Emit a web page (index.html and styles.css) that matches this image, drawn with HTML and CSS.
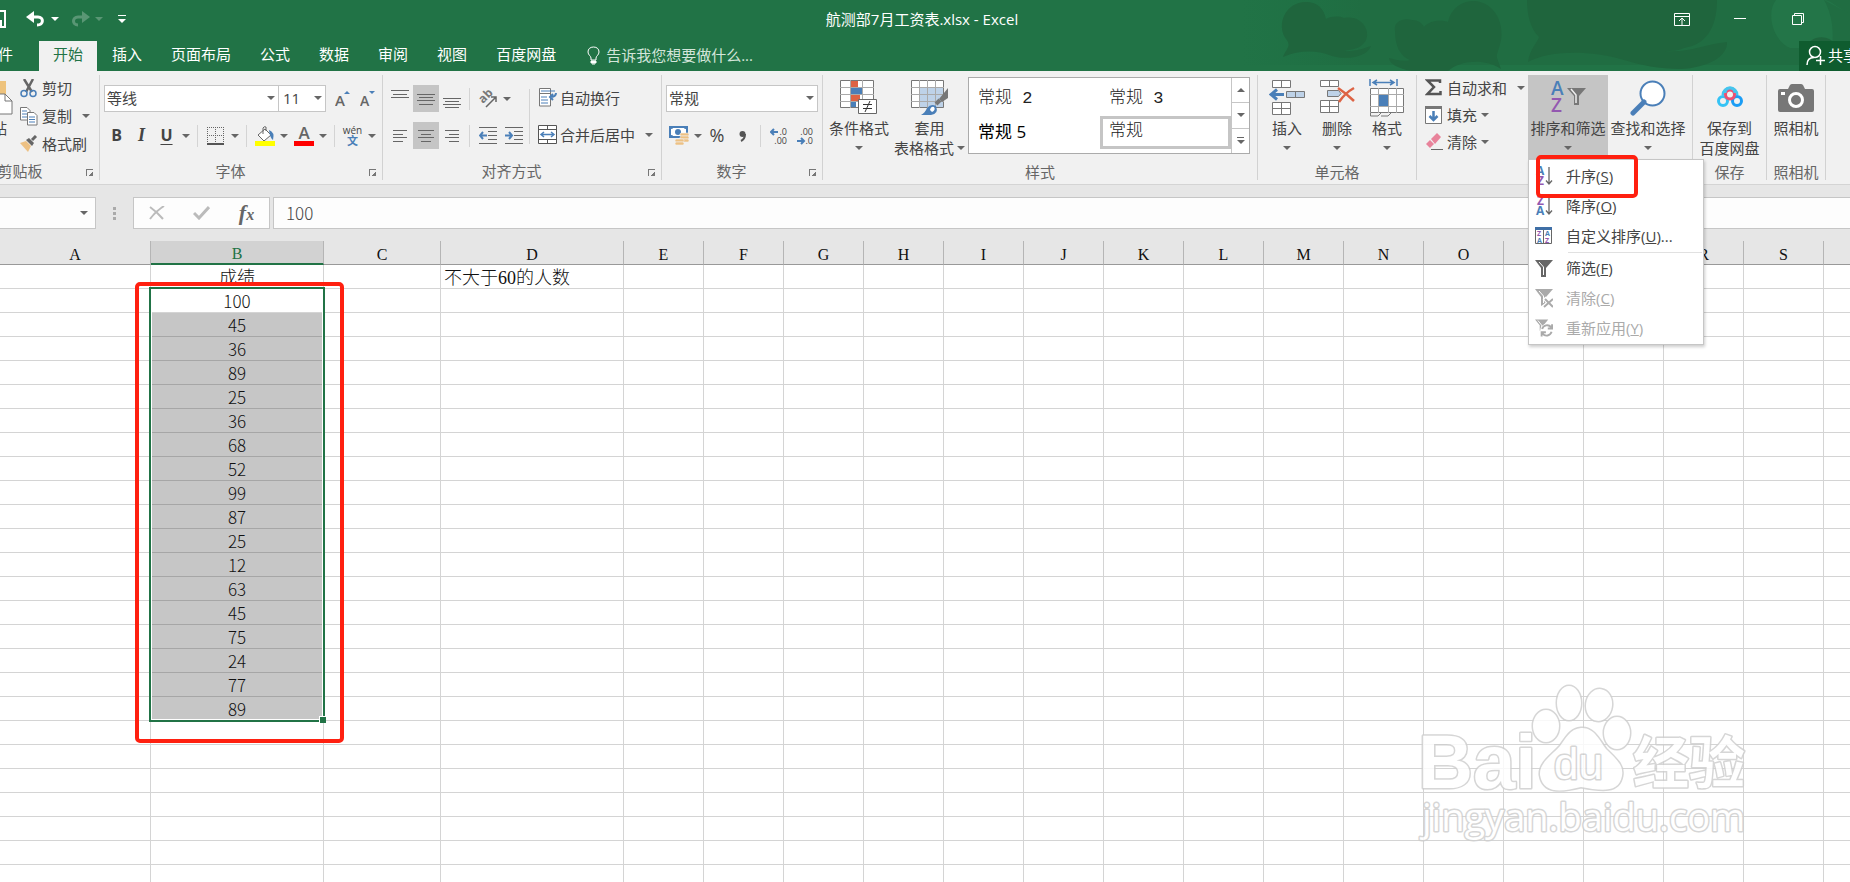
FILE: index.html
```html
<!DOCTYPE html>
<html lang="zh-CN">
<head>
    <meta charset="UTF-8">
    <meta name="viewport" content="width=device-width, initial-scale=1.0">
    <title>航测部7月工资表.xlsx - Excel</title>
    <link rel="stylesheet" href="styles.css">
</head>
<body>

    <header class="app-header">
        <!-- Nubes decorativas -->
        <svg class="clouds" width="610" height="71" viewBox="0 0 610 71" aria-hidden="true">
            <defs>
                <linearGradient id="tint" x1="0" x2="1" y1="0" y2="0">
                    <stop offset="0" stop-color="#1d7044" stop-opacity="0"/>
                    <stop offset="0.2" stop-color="#206d42" stop-opacity="1"/>
                </linearGradient>
            </defs>
            <rect width="610" height="65" fill="url(#tint)"/>
            <g fill="#1f653d">
                <path d="M43 57C46 49 52 46 46 39C36 25 45 2 66 2C78 2 84 9 86 19C92 16 99 16 104 18C124 14 134 36 122 45C116 50 108 50 103 51C116 52 124 48 131 46C126 58 106 60 92 56C76 50 60 50 43 57Z"/>
                <path d="M155 31C153 22 163 17 172 20C178 20 182 23 184 27C190 20 202 20 208 22C211 8 222 1 234 1C254 2 264 22 261 40C259 50 256 54 257 58L261 69C245 58 220 60 208 71C170 76 149 66 149 58C156 60 164 62 170 60C160 56 155 46 155 31Z"/>
                <path d="M287 0H477C477 22 470 44 444 48C438 51 430 51 424 51C452 53 464 44 487 42C488 56 468 68 440 69C420 69 400 65 384 60C350 50 310 50 288 62C290 48 298 42 299 37C290 28 287 14 287 0Z"/>
            </g>
            <path d="M610 14C598 8 590 0 584 0H536C526 12 532 40 550 48H592C594 30 592 14 584 0" fill="#237548"/>
            <path d="M566 50C568 33 594 33 598 50Z" fill="#1f653d"/>
        </svg>

        <div class="title-bar">
            <div class="quick-access">
                <button class="qat save" aria-label="保存">
                    <svg width="18" height="18" viewBox="0 0 18 18"><path d="M1 1H17V17H4L1 14Z" fill="none" stroke="#fff" stroke-width="2"/><path d="M5 10H14V16H12V13H9V16H5Z" fill="#fff"/></svg>
                </button>
                <button class="qat" aria-label="撤消">
                    <svg width="20" height="18" viewBox="0 0 20 18"><path d="M3 7H12C18 7 18 15 11 15" fill="none" stroke="#fff" stroke-width="3"/><path d="M0 7L8 1V13Z" fill="#fff"/></svg>
                    <span class="caret"></span>
                </button>
                <button class="qat dim" aria-label="恢复">
                    <svg width="20" height="18" viewBox="0 0 20 18"><path d="M17 7H8C2 7 2 15 8 15" fill="none" stroke="#fff" stroke-width="3"/><path d="M20 7L12 1V13Z" fill="#fff"/></svg>
                    <span class="caret"></span>
                </button>
                <button class="qat more" aria-label="自定义快速访问工具栏"><span class="caret"></span></button>
            </div>
            <h1>航测部7月工资表.xlsx - Excel</h1>
            <div class="window-buttons">
                <button aria-label="功能区显示选项"><svg width="16" height="13" viewBox="0 0 16 13"><path d="M.5 .5H15.500V12.500H.5ZM.5 3.500H15.500M8 12V5M5 8L8 5L11 8" fill="none" stroke="#fff"/></svg></button>
                <button aria-label="最小化"><svg width="12" height="12" viewBox="0 0 12 12"><path d="M0 5.500H12" stroke="#fff"/></svg></button>
                <button aria-label="还原"><svg width="12" height="12" viewBox="0 0 12 12"><path d="M.5 2.500H9.500V11.500H.5ZM2.500 2.500V.5H11.500V9.500H9.500" fill="none" stroke="#fff"/></svg></button>
                <button aria-label="关闭"><svg width="12" height="12" viewBox="0 0 12 12"><path d="M0 0L12 12M12 0L0 12" stroke="#fff"/></svg></button>
            </div>
        </div>

        <nav class="tabs">
            <button class="tab file">文件</button>
            <button class="tab active">开始</button>
            <button class="tab">插入</button>
            <button class="tab">页面布局</button>
            <button class="tab">公式</button>
            <button class="tab">数据</button>
            <button class="tab">审阅</button>
            <button class="tab">视图</button>
            <button class="tab">百度网盘</button>
            <label class="tell-me">
                <svg width="13" height="19" viewBox="0 0 13 19"><path d="M4 14V12C4 10 1 9 1 6C1 3 3 1 6.500 1C10 1 12 3 12 6C12 9 9 10 9 12V14Z" fill="none" stroke="#fff"/><path d="M4 15H9V17H4ZM5 18H8" stroke="#fff" fill="#fff"/></svg>
                <input type="text" placeholder="告诉我您想要做什么..." aria-label="告诉我您想要做什么">
            </label>
            <button class="share">
                <svg width="19" height="20" viewBox="0 0 19 20"><g fill="none" stroke="#fff" stroke-width="1.500"><circle cx="9" cy="7" r="5.500"/><path d="M1 20C1 15 4 12.500 8 12.500M10 15.500H19M14.500 11V20"/></g></svg>
                <span>共享</span>
            </button>
        </nav>
    </header>

    <main>
        <section class="ribbon">

            <!-- 剪贴板 -->
            <div class="group clipboard">
                <div class="group-body">
                    <button class="big paste">
                        <span class="big-icon"><svg width="42" height="36" viewBox="0 0 42 36"><path d="M6 1H35V30H6Z" fill="#eec37d"/><path d="M16 14H34L41 21V34H16Z" fill="#fff" stroke="#777"/><path d="M34 14V21H41" fill="none" stroke="#777"/></svg></span>
                        <span>粘贴</span>
                    </button>
                    <div class="stack">
                        <button class="item">
                            <svg width="18" height="19" viewBox="0 0 18 19"><path d="M4 0L12 13M13 0L6 13" stroke="#666" stroke-width="2.500"/><g fill="none" stroke="#4a7fb8" stroke-width="1.500"><circle cx="4" cy="14.500" r="3"/><circle cx="13" cy="14.500" r="3"/></g></svg>
                            <span>剪切</span>
                        </button>
                        <button class="item">
                            <svg width="18" height="19" viewBox="0 0 18 19"><path d="M.5 .5H7L10 3.500V13H.5Z" fill="#fff" stroke="#777"/><path d="M2 4H7M2 7H7M2 10H7" stroke="#4a7fb8"/><path d="M7.500 5.500H14L17 8.500V18H7.500Z" fill="#fff" stroke="#777"/><path d="M9 10H15M9 12.500H15M9 15H15" stroke="#4a7fb8"/></svg>
                            <span>复制</span>
                            <span class="caret far"></span>
                        </button>
                        <button class="item">
                            <svg width="18" height="18" viewBox="0 0 18 18"><path d="M0 8L6 6L11 11L8 17Z" fill="#edc184"/><path d="M6 5L9 3L14 8L12 11Z" fill="#666"/><path d="M12 5L16 1" stroke="#666" stroke-width="3"/></svg>
                            <span>格式刷</span>
                        </button>
                    </div>
                </div>
                <div class="group-label"><span>剪贴板</span><button class="launcher" aria-label="剪贴板设置"></button></div>
            </div>

            <!-- 字体 -->
            <div class="group font">
                <div class="group-body rows">
                    <div class="row">
                        <span class="select"><select aria-label="字体" class="font-name"><option>等线</option></select></span>
                        <span class="select"><select aria-label="字号" class="font-size"><option>11</option></select></span>
                        <button class="tool grow" aria-label="增大字号"><svg width="15" height="18" viewBox="0 0 15 18"><text x="0" y="16" class="glyph-a">A</text><path d="M9 4L12 1L15 4Z" fill="#4a7fb8"/></svg></button>
                        <button class="tool" aria-label="减小字号"><svg width="15" height="18" viewBox="0 0 15 18"><text x="0" y="16" class="glyph-a small">A</text><path d="M9 1L12 4L15 1Z" fill="#4a7fb8"/></svg></button>
                    </div>
                    <div class="row">
                        <button class="tool bold">B</button>
                        <button class="tool italic">I</button>
                        <button class="tool underline">U</button>
                        <button class="drop" aria-label="下划线"><span class="caret"></span></button>
                        <i class="sep"></i>
                        <button class="tool" aria-label="边框"><svg width="17" height="18" viewBox="0 0 17 18"><path d="M0 .5H17M0 8.500H17M.5 0V17M8.500 0V17M16.500 0V17" stroke="#666" stroke-dasharray="1 1"/><path d="M0 17H17" stroke="#555" stroke-width="2"/></svg></button>
                        <button class="drop" aria-label="边框选项"><span class="caret"></span></button>
                        <i class="sep"></i>
                        <button class="tool" aria-label="填充颜色"><svg width="20" height="20" viewBox="0 0 20 20"><path d="M3 9L10 3L16 9L9 15Z" fill="#fff" stroke="#666"/><path d="M8 8V2Q9 0 11 1V5" fill="none" stroke="#666"/><path d="M14 4Q20 6 18 14Q15 12 14 4Z" fill="#4a7fb8"/><path d="M0 15H20V20H0Z" fill="#ff0"/></svg></button>
                        <button class="drop" aria-label="填充颜色选项"><span class="caret"></span></button>
                        <button class="tool" aria-label="字体颜色"><svg width="20" height="20" viewBox="0 0 20 20"><text x="10" y="13" class="glyph-a large" text-anchor="middle">A</text><path d="M0 15H20V20H0Z" fill="#f00"/></svg></button>
                        <button class="drop" aria-label="字体颜色选项"><span class="caret"></span></button>
                        <i class="sep"></i>
                        <button class="tool pinyin"><span>wén</span><b>文</b></button>
                        <button class="drop" aria-label="拼音选项"><span class="caret"></span></button>
                    </div>
                </div>
                <div class="group-label"><span>字体</span><button class="launcher" aria-label="字体设置"></button></div>
            </div>

            <!-- 对齐方式 -->
            <div class="group align">
                <div class="group-body">
                    <div class="rows">
                        <div class="row">
                            <button class="tool" aria-label="顶端对齐"><svg width="18" height="18" viewBox="0 0 18 18"><path d="M0 .5H18M2 4.500H16M0 7.500H18" stroke="#666"/></svg></button>
                            <button class="tool on" aria-label="垂直居中"><svg width="18" height="18" viewBox="0 0 18 18"><path d="M0 4.500H18M2 7.500H16M0 10.500H18M2 14.500H16" stroke="#666"/></svg></button>
                            <button class="tool" aria-label="底端对齐"><svg width="18" height="18" viewBox="0 0 18 18"><path d="M0 8.500H18M2 11.500H16M0 14.500H18M2 17.500H16" stroke="#666"/></svg></button>
                            <i class="sep"></i>
                            <button class="tool" aria-label="方向"><svg width="20" height="18" viewBox="0 0 20 18" overflow="visible"><text class="ab" transform="translate(5 14) rotate(-45)">ab</text><path d="M8 17L18 7M13 7H18V12" fill="none" stroke="#666" stroke-width="1.500"/></svg></button>
                            <button class="drop" aria-label="方向选项"><span class="caret"></span></button>
                        </div>
                        <div class="row">
                            <button class="tool" aria-label="左对齐"><svg width="14" height="12" viewBox="0 0 14 12"><path d="M0 .5H14M0 4.500H10M0 7.500H14M0 11.500H10" stroke="#666"/></svg></button>
                            <button class="tool on" aria-label="居中"><svg width="16" height="12" viewBox="0 0 16 12"><path d="M0 .5H16M3 4.500H13M0 7.500H16M3 11.500H13" stroke="#666"/></svg></button>
                            <button class="tool" aria-label="右对齐"><svg width="14" height="12" viewBox="0 0 14 12"><path d="M0 .5H14M4 4.500H14M0 7.500H14M4 11.500H14" stroke="#666"/></svg></button>
                            <i class="sep"></i>
                            <button class="tool" aria-label="减少缩进量"><svg width="18" height="17" viewBox="0 0 18 17"><path d="M0 .5H18M9 4.500H18M9 8.500H18M9 12.500H18M0 16.500H18" stroke="#666"/><path d="M1 8.500H8M4 5L1 8.500L4 12" fill="none" stroke="#4a7fb8" stroke-width="2"/></svg></button>
                            <button class="tool" aria-label="增加缩进量"><svg width="18" height="17" viewBox="0 0 18 17"><path d="M0 .5H18M9 4.500H18M9 8.500H18M9 12.500H18M0 16.500H18" stroke="#666"/><path d="M0 8.500H7M4 5L7 8.500L4 12" fill="none" stroke="#4a7fb8" stroke-width="2"/></svg></button>
                        </div>
                    </div>
                    <i class="sep tall"></i>
                    <div class="rows">
                        <button class="item wide">
                            <svg width="19" height="19" viewBox="0 0 19 19"><path d="M1.500 .5H12.500V18H1.500Z" fill="#fff" stroke="#777"/><path d="M1 5.500H13" stroke="#777"/><path d="M3 3H17M3 9H9M3 12H10M3 15H10" stroke="#4a7fb8"/><path d="M18 5Q18 9 12 9M15 6L12 9L15 12" fill="none" stroke="#4a7fb8" stroke-width="2"/></svg>
                            <span>自动换行</span>
                        </button>
                        <button class="item wide">
                            <svg width="19" height="19" viewBox="0 0 19 19"><path d="M.5 .5H18.500V18.500H.5ZM.5 4.500H18.500M.5 14.500H18.500M9.500 0V4M9.500 15V19" fill="#fff" stroke="#555"/><path d="M3 9.500H16M6 7L3 9.500L6 12M13 7L16 9.500L13 12" fill="none" stroke="#4a7fb8" stroke-width="1.500"/></svg>
                            <span>合并后居中</span>
                            <span class="caret"></span>
                        </button>
                    </div>
                </div>
                <div class="group-label"><span>对齐方式</span><button class="launcher" aria-label="对齐设置"></button></div>
            </div>

            <!-- 数字 -->
            <div class="group number">
                <div class="group-body rows">
                    <div class="row">
                        <span class="select"><select aria-label="数字格式" class="number-format"><option>常规</option></select></span>
                    </div>
                    <div class="row">
                        <button class="tool" aria-label="会计数字格式"><svg width="20" height="20" viewBox="0 0 20 20"><path d="M0 0H19V12H0Z" fill="#4a7fb8"/><path d="M2 3Q4 3 4 2H15Q15 3 17 3V9Q15 9 15 10H4Q4 9 2 9Z" fill="#fff"/><circle cx="9" cy="6" r="3" fill="#4a7fb8"/><g fill="#edc184" stroke="#f1f1f1" stroke-width=".6"><rect x="11" y="7" width="9" height="3" rx="1.500"/><rect x="11" y="10" width="9" height="3" rx="1.500"/><rect x="11" y="13" width="9" height="3" rx="1.500"/><rect x="6" y="13" width="9" height="3" rx="1.500"/><rect x="6" y="16" width="9" height="3" rx="1.500"/></g></svg></button>
                        <button class="drop" aria-label="会计格式选项"><span class="caret"></span></button>
                        <button class="tool percent">%</button>
                        <button class="tool" aria-label="千位分隔样式"><svg width="8" height="12" viewBox="0 0 8 12"><circle cx="3.500" cy="4" r="3" fill="#555"/><path d="M6 4Q6 9 2 11" fill="none" stroke="#555" stroke-width="2"/></svg></button>
                        <i class="sep"></i>
                        <button class="tool decimal" aria-label="增加小数位数"><svg width="18" height="18" viewBox="0 0 18 18"><path d="M1 5H8M4 2L1 5L4 8" fill="none" stroke="#4a7fb8" stroke-width="2"/><text x="17" y="8" text-anchor="end">.0</text><text x="17" y="17" text-anchor="end">.00</text></svg></button>
                        <button class="tool decimal" aria-label="减少小数位数"><svg width="18" height="18" viewBox="0 0 18 18"><path d="M1 14H8M5 11L8 14L5 17" fill="none" stroke="#4a7fb8" stroke-width="2"/><text x="17" y="8" text-anchor="end">.00</text><text x="17" y="17" text-anchor="end">.0</text></svg></button>
                    </div>
                </div>
                <div class="group-label"><span>数字</span><button class="launcher" aria-label="数字设置"></button></div>
            </div>

            <!-- 样式 -->
            <div class="group styles">
                <div class="group-body">
                    <button class="big cond">
                        <span class="big-icon"><svg width="38" height="35" viewBox="0 0 38 35"><path d="M.5 .5H33.500V27.500H.5Z" fill="#fff" stroke="#777"/><path d="M0 7.500H34M0 14.500H34M0 21.500H34M10.500 0V28M22.500 0V28" stroke="#aaa"/><path d="M11 1H18V7H11ZM11 15H20V21H11Z" fill="#dd6344"/><path d="M11 8H22V14H11ZM11 22H16V27H11Z" fill="#4a7fb8"/><path d="M18.500 19.500H36.500V33.500H18.500Z" fill="#fff" stroke="#666"/><path d="M23 24.500H32M23 28.500H32M30 21L25 32" stroke="#333"/></svg></span>
                        <span>条件格式</span>
                        <span class="caret"></span>
                    </button>
                    <button class="big table-format">
                        <span class="big-icon"><svg width="38" height="35" viewBox="0 0 38 35"><path d="M.5 .5H32.500V27.500H.5Z" fill="#fff" stroke="#777"/><path d="M9 8H32V27H9Z" fill="#bed2e8"/><path d="M0 7.500H33M0 14.500H33M0 21.500H33M8.500 0V28M16.500 0V28M24.500 0V28" stroke="#aaa"/><path d="M37 8V18L31 22L28 19Z" fill="#777"/><path d="M29 20L25 24" stroke="#777" stroke-width="4"/><path d="M10 35Q14 33 16 28Q20 23 25 26Q28 34 20 35Z" fill="#4a7fb8"/><path d="M19 30Q20 26 23 27Q25 30 21 32Z" fill="#fff"/></svg></span>
                        <span>套用</span>
                        <span class="with-caret">表格格式<span class="caret"></span></span>
                    </button>
                    <div class="gallery">
                        <div class="gallery-items">
                            <button>常规 2</button>
                            <button>常规 3</button>
                            <button class="sans">常规 5</button>
                            <button class="chosen">常规</button>
                        </div>
                        <div class="gallery-scroll">
                            <button aria-label="向上"><span class="caret up"></span></button>
                            <button aria-label="向下"><span class="caret"></span></button>
                            <button aria-label="其他" class="more"><span class="caret"></span></button>
                        </div>
                    </div>
                </div>
                <div class="group-label"><span>样式</span></div>
            </div>

            <!-- 单元格 -->
            <div class="group cells">
                <div class="group-body">
                    <button class="big">
                        <span class="big-icon"><svg width="36" height="36" viewBox="0 0 36 36"><g fill="#fff" stroke="#777"><path d="M3.500 .5H21.500V7.500H3.500ZM12.500 0V8"/><path d="M3.500 22.500H21.500V34.500H3.500ZM3 28.500H22M12.500 22V35"/></g><path d="M17.500 11.500H35.500V17.500H17.500ZM26.500 11V18" fill="#bed2e8" stroke="#777"/><path d="M2 14.500H15M8 9.500L2 14.500L8 19.500" fill="none" stroke="#4a7fb8" stroke-width="3"/></svg></span>
                        <span>插入</span>
                        <span class="caret"></span>
                    </button>
                    <button class="big">
                        <span class="big-icon"><svg width="36" height="36" viewBox="0 0 36 36"><g fill="#fff" stroke="#777"><path d="M1.500 .5H19.500V6.500H1.500ZM10.500 0V7"/><path d="M1.500 20.500H19.500V32.500H1.500ZM1 26.500H20M10.500 20V33"/></g><path d="M8.500 10.500H19.500L22 13.500L19.500 16.500H8.500Z" fill="#bed2e8" stroke="#777"/><path d="M19 8Q28 14 35 21M35 8Q26 13 20 22" fill="none" stroke="#dd6344" stroke-width="2.500"/></svg></span>
                        <span>删除</span>
                        <span class="caret"></span>
                    </button>
                    <button class="big">
                        <span class="big-icon"><svg width="36" height="38" viewBox="0 0 36 38"><path d="M1 0V7M28 0V7M4 3.500H25M8 1L4 3.500L8 6M21 1L25 3.500L21 6" fill="none" stroke="#4a7fb8" stroke-width="1.500"/><path d="M1.500 9.500H34.500V33.500H1.500Z" fill="#fff" stroke="#777"/><path d="M1 15.500H35M1 27.500H35M9.500 9V34M19.500 9V34M27.500 9V34" stroke="#aaa"/><path d="M10 16H19V27H10Z" fill="#4a7fb8"/><path d="M1.500 34V37H9L12 34M12 37H19L22 34" fill="none" stroke="#777"/></svg></span>
                        <span>格式</span>
                        <span class="caret"></span>
                    </button>
                </div>
                <div class="group-label"><span>单元格</span></div>
            </div>

            <!-- 编辑 -->
            <div class="group editing">
                <div class="group-body">
                    <div class="stack">
                        <button class="item">
                            <svg width="18" height="17" viewBox="0 0 18 17"><path d="M15 4V1.500H2.500L9 8L2.500 15H15.500V12" fill="none" stroke="#555" stroke-width="2.500"/></svg>
                            <span>自动求和</span>
                            <span class="caret far"></span>
                        </button>
                        <button class="item">
                            <svg width="18" height="18" viewBox="0 0 18 18"><path d="M.5 .5H16.500V17.500H.5Z" fill="#fff" stroke="#777"/><path d="M0 0H17V3H0Z" fill="#777"/><path d="M8.500 5V14M4.500 10L8.500 14L12.500 10" fill="none" stroke="#4a7fb8" stroke-width="2.500"/></svg>
                            <span>填充</span>
                            <span class="caret"></span>
                        </button>
                        <button class="item">
                            <svg width="18" height="17" viewBox="0 0 18 17"><path d="M6 6L12 0L16 4L10 11Z" fill="#e8839b"/><path d="M1 11L5 7L9 11L5 15Z" fill="#e8839b"/><path d="M6 16.500H18" stroke="#666"/></svg>
                            <span>清除</span>
                            <span class="caret"></span>
                        </button>
                    </div>
                    <div class="sort">
                        <button class="big pressed" aria-expanded="true">
                            <span class="big-icon"><svg width="36" height="36" viewBox="0 0 36 36"><text x="1" y="15" class="az blue">A</text><text x="1" y="32" class="az violet">Z</text><path d="M17 8H36L29 16V25L24 25V16Z" fill="#777"/><path d="M21 9L26 15V23" fill="none" stroke="#eee" stroke-width="1.500"/></svg></span>
                            <span>排序和筛选</span>
                            <span class="caret"></span>
                        </button>
                        <div class="menu" role="menu">
                            <button role="menuitem">
                                <svg width="18" height="20" viewBox="0 0 18 20"><text x="1" y="9" class="mini blue">A</text><text x="2" y="19" class="mini violet">Z</text><path d="M14 1V18M11 14.500L14 18L17 14.500" fill="none" stroke="#666" stroke-width="1.300"/></svg>
                                <span>升序(<u>S</u>)</span>
                            </button>
                            <button role="menuitem">
                                <svg width="18" height="20" viewBox="0 0 18 20"><text x="2" y="9" class="mini violet">Z</text><text x="1" y="19" class="mini blue">A</text><path d="M14 1V18M11 14.500L14 18L17 14.500" fill="none" stroke="#666" stroke-width="1.300"/></svg>
                                <span>降序(<u>O</u>)</span>
                            </button>
                            <button role="menuitem">
                                <svg width="18" height="18" viewBox="0 0 18 18"><path d="M.5 .5H16.500V16.500H.5ZM8.500 0V17" fill="#fff" stroke="#666"/><path d="M0 0H17V3H0Z" fill="#3f6fa6"/><g class="tiny"><text x="2" y="9" class="violet">Z</text><text x="2" y="16" class="blue">A</text><text x="10" y="9" class="blue">A</text><text x="10" y="16" class="violet">Z</text></g></svg>
                                <span>自定义排序(<u>U</u>)...</span>
                            </button>
                            <hr>
                            <button role="menuitem">
                                <svg width="18" height="18" viewBox="0 0 18 18"><path d="M0 1H18L11 9V18H6V9Z" fill="#666"/><path d="M4 3L8.500 8V16" fill="none" stroke="#fff"/></svg>
                                <span>筛选(<u>F</u>)</span>
                            </button>
                            <button role="menuitem" disabled>
                                <svg width="18" height="19" viewBox="0 0 18 19"><path d="M0 0H18L11 8V14L6 17V8Z" fill="#aaa"/><path d="M4 2L8.500 7V14" fill="none" stroke="#fff"/><path d="M9 9L18 18M18 9L9 18" stroke="#fff" stroke-width="4"/><path d="M10 10L18 18M18 10L9 18" stroke="#aaa" stroke-width="2"/></svg>
                                <span>清除(<u>C</u>)</span>
                            </button>
                            <button role="menuitem" disabled>
                                <svg width="18" height="19" viewBox="0 0 19 19"><path d="M0 0H14L9 6V12L5 12V6Z" fill="#aaa"/><path d="M3 1L7 6V12" fill="none" stroke="#fff"/><circle cx="12.500" cy="11.500" r="7" fill="#fff"/><path d="M7.500 10A5.500 5.500 0 0 1 17 8M18 5V9.500H13.500M17.500 13A5.500 5.500 0 0 1 8 15M7 18V13.500H11.500" fill="none" stroke="#aaa" stroke-width="2"/></svg>
                                <span>重新应用(<u>Y</u>)</span>
                            </button>
                        </div>
                        <div class="mark mark-menu"></div>
                    </div>
                    <button class="big find">
                        <span class="big-icon"><svg width="36" height="36" viewBox="0 0 36 36"><circle cx="22.500" cy="13.500" r="12" fill="#fff" stroke="#4a7fb8" stroke-width="2"/><path d="M14 22L3 33" stroke="#4a7fb8" stroke-width="5" stroke-linecap="round"/></svg></span>
                        <span>查找和选择</span>
                        <span class="caret"></span>
                    </button>
                </div>
                <div class="group-label"><span>编辑</span></div>
            </div>

            <!-- 百度网盘 -->
            <div class="group netdisk">
                <div class="group-body">
                    <button class="big">
                        <span class="big-icon"><svg width="26" height="24" viewBox="0 0 26 24"><g fill="none" stroke-width="3"><circle cx="6" cy="15" r="4.500" stroke="#35c3f5"/><circle cx="20" cy="15" r="4.500" stroke="#1b9df5"/><path d="M6 9A7 7 0 0 1 20 9" stroke="#45c5ee"/><circle cx="13" cy="8.500" r="4.500" stroke="#ee5070"/><path d="M8 7A5 5 0 0 1 18 7" stroke="#45c5ee"/></g></svg></span>
                        <span>保存到</span>
                        <span>百度网盘</span>
                    </button>
                </div>
                <div class="group-label"><span>保存</span></div>
            </div>

            <!-- 照相机 -->
            <div class="group camera">
                <div class="group-body">
                    <button class="big">
                        <span class="big-icon"><svg width="36" height="28" viewBox="0 0 36 28"><path d="M2 5H10L12 1Q13 0 14 0H23Q24 0 25 1L27 5H34Q36 5 36 7V26Q36 28 34 28H2Q0 28 0 26V7Q0 5 2 5Z" fill="#777"/><circle cx="18" cy="16" r="6.500" fill="#777" stroke="#fff" stroke-width="3"/><path d="M3 8H7V11H3Z" fill="#fff"/></svg></span>
                        <span>照相机</span>
                    </button>
                </div>
                <div class="group-label"><span>照相机</span></div>
            </div>
        </section>

        <section class="formula-bar">
            <div class="name-box"><input type="text" aria-label="名称框"><span class="caret"></span></div>
            <div class="dots"><i></i><i></i><i></i></div>
            <div class="formula-buttons">
                <button aria-label="取消"><svg width="16" height="14" viewBox="0 0 16 14"><path d="M1 1Q8 6 14 13M15 0Q7 5 1 13" fill="none" stroke="#bbb" stroke-width="2"/></svg></button>
                <button aria-label="输入"><svg width="17" height="14" viewBox="0 0 17 14"><path d="M1 7L6 12L16 1" fill="none" stroke="#bbb" stroke-width="3"/></svg></button>
                <button class="fx" aria-label="插入函数"><i>f</i><i class="x">x</i></button>
            </div>
            <input class="formula" type="text" value="100" aria-label="编辑栏">
        </section>

        <section class="sheet">
            <table>
                <colgroup>
                    <col class="col-a"><col class="col-b"><col class="col-c"><col class="col-d">
                    <col class="col" span="22">
                </colgroup>
                <thead><tr id="letters"></tr></thead>
                <tbody id="rows"></tbody>
            </table>
            <div class="selection"></div>
            <div class="mark mark-range"></div>

            <svg class="watermark" width="340" height="170" viewBox="0 0 340 170">
                <g class="outline">
                    <ellipse cx="130" cy="45" rx="13" ry="16"/>
                    <ellipse cx="153" cy="22" rx="12" ry="17"/>
                    <ellipse cx="183" cy="24" rx="13" ry="16" transform="rotate(8 183 24)"/>
                    <ellipse cx="201" cy="52" rx="13" ry="16"/>
                    <path d="M165 47C178 46 184 60 190 68C200 78 208 84 206 95C203 112 186 110 165 106C145 111 127 113 124 94C123 82 136 74 144 65C150 57 154 48 165 47Z"/>
                    <text x="2" y="107" class="wm-name">Bai</text>
                    <text x="138" y="98" class="wm-du">du</text>
                    <text x="217" y="102" class="wm-cjk">经验</text>
                    <text x="6" y="150" class="wm-url">jingyan.baidu.com</text>
                </g>
            </svg>
        </section>
    </main>

    <script>
        const letters = 'ABCDEFGHIJKLMNOPQRSTUVWXYZ'.split('');
        const scores = [100, 45, 36, 89, 25, 36, 68, 52, 99, 87, 25, 12, 63, 45, 75, 24, 77, 89];
        const rowCount = 40;

        document.getElementById('letters').innerHTML = letters
            .map(l => `<th class="${l === 'B' ? 'current' : ''}">${l}</th>`)
            .join('');

        const body = document.getElementById('rows');
        for (let r = 0; r < rowCount; r++) {
            const row = body.insertRow();
            letters.forEach(() => row.insertCell());

            if (r === 0) {
                row.cells[1].textContent = '成绩';
                row.cells[1].className = 'head';
                row.cells[3].textContent = '不大于60的人数';
                row.cells[3].className = 'note';
            } else if (r <= scores.length) {
                row.cells[1].textContent = scores[r - 1];
                row.cells[1].className = r > 1 ? 'score picked' : 'score';
            }
        }
    </script>
</body>
</html>
```
FILE: styles.css
```css
* {
    box-sizing: border-box;
}
body {
    margin: 0;
    height: 100vh;
    overflow: hidden;
    display: flex;
    flex-direction: column;
    font-family: "Open Sans", "Noto Sans CJK SC", sans-serif;
    font-size: 15px;
    line-height: 20px;
    color: #444;
    background-color: #fff;
}
button, input, select {
    font: inherit;
    color: inherit;
    margin: 0;
    padding: 0;
    border: 0;
    background: none;
    outline: none;
}
button {
    white-space: nowrap;
}
svg {
    display: block;
    flex-shrink: 0;
}
.caret {
    flex-shrink: 0;
    width: 0;
    height: 0;
    border: 4px solid transparent;
    border-top-color: #666;
    border-bottom: 0;
}
.caret.up {
    border-top: 0;
    border-bottom: 4px solid #666;
}

/* Cabecera */
.app-header {
    position: relative;
    height: 71px;
    overflow: hidden;
    background-color: #217346;
    color: #fff;
}
.clouds {
    position: absolute;
    top: 0;
    right: 0;
}
.title-bar {
    position: relative;
    display: grid;
    grid-template-columns: 1fr auto 1fr;
    height: 41px;
    padding-right: 6px;
}
.title-bar h1 {
    margin: 0;
    padding-top: 9px;
    font-size: 15px;
    font-weight: normal;
}
.quick-access {
    display: flex;
    align-items: center;
    height: 38px;
    gap: 11px;
}
.qat {
    display: flex;
    align-items: center;
    gap: 5px;
}
.qat .caret {
    border-top-color: #fff;
}
.save {
    margin-left: -12px;
    padding-right: 9px;
}
.dim {
    opacity: 0.25;
}
.quick-access .more {
    padding: 3px 0 0;
    margin-left: 4px;
    border-top: 1px solid #fff;
}
.window-buttons {
    display: flex;
    justify-content: flex-end;
    height: 38px;
    margin-right: -41px;
}
.window-buttons button {
    display: flex;
    align-items: center;
    justify-content: center;
    width: 58px;
}
.tabs {
    position: relative;
    display: flex;
    gap: 1px;
    height: 30px;
    margin-left: -31px;
}
.tab {
    padding: 0 14px 4px;
    flex-shrink: 0;
}
.tab.file {
    margin-right: 11px;
}
.tab.active {
    background-color: #f1f1f1;
    color: #217346;
}
.tell-me {
    display: flex;
    align-items: center;
    gap: 6px;
    padding: 0 0 2px 16px;
}
.tell-me input {
    width: 180px;
}
.tell-me input::placeholder {
    color: #d3e5da;
    opacity: 1;
}
.share {
    display: flex;
    align-items: center;
    gap: 3px;
    width: 51px;
    margin-left: auto;
    padding-left: 7px;
    padding-bottom: 2px;
    overflow: hidden;
    background-color: #0f5c2f;
}

/* Cinta de opciones */
main {
    flex: 1;
    display: flex;
    flex-direction: column;
    min-height: 0;
}
.ribbon {
    position: relative;
    z-index: 2;
    display: flex;
    flex-shrink: 0;
    height: 114px;
    padding: 4px 0;
    background-color: #f1f1f1;
    border-bottom: 1px solid #d4d4d4;
}
.group {
    display: flex;
    flex-direction: column;
    flex-shrink: 0;
    border-right: 1px solid #d2d2d2;
}
.group-body {
    display: flex;
    height: 87px;
    padding-left: 4px;
}
.group-label {
    display: flex;
    height: 19px;
    padding-right: 6px;
    color: #666;
}
.group-label span {
    flex: 1;
    text-align: center;
}
.group-label:not(:has(.launcher)) {
    padding: 0;
}
.launcher {
    width: 7px;
    height: 7px;
    margin: 8px 0 0 8px;
    border-top: 1px solid #777;
    border-left: 1px solid #777;
    background: linear-gradient(135deg, transparent 60%, #777 60%);
}
.clipboard {
    width: 100px;
}
.clipboard .group-body {
    justify-content: flex-end;
    overflow: hidden;
}
.clipboard .group-label {
    margin-left: -38px;
}
.font {
    width: 283px;
}
.align {
    width: 279px;
}
.number {
    width: 161px;
}
.styles {
    width: 435px;
}
.cells {
    width: 159px;
}
.editing {
    width: 276px;
}
.netdisk {
    width: 74px;
}
.camera {
    width: 59px;
}
.netdisk .group-body, .camera .group-body {
    padding: 0;
    justify-content: center;
}
.rows {
    display: flex;
    flex-direction: column;
    gap: 10px;
    padding-top: 10px;
}
.row {
    display: flex;
    align-items: center;
    height: 27px;
}
.tool {
    display: flex;
    align-items: center;
    justify-content: center;
    width: 25px;
    height: 27px;
}
.align .tool, .number .tool {
    width: 26px;
}
.tool.on {
    background-color: #c5c5c5;
}
.tool.grow {
    margin: 0 0 0 4px;
}
.drop {
    display: flex;
    align-items: center;
    justify-content: center;
    width: 12px;
    height: 27px;
}
.font .drop {
    width: 14px;
}
.sep {
    width: 1px;
    height: 22px;
    margin: 0 5px 0 4px;
    background-color: #d4d4d4;
}
.sep.tall {
    height: 55px;
    margin: 14px 6px 0 2px;
}
.bold, .italic, .underline {
    padding-bottom: 2px;
    font-family: "Open Sans", sans-serif;
    font-weight: bold;
    font-size: 16px;
}
.italic {
    font-family: "Liberation Serif", serif;
    font-style: italic;
    font-size: 18px;
}
.underline {
    text-decoration: underline;
    text-underline-offset: 3px;
}
.pinyin {
    flex-direction: column;
    font-size: 10px;
    line-height: 9px;
}
.pinyin b {
    color: #4a7fb8;
    font-size: 11px;
    line-height: 11px;
}
.percent {
    padding-bottom: 2px;
    font-size: 18px;
}
.decimal text {
    font: 9px "Open Sans", sans-serif;
    fill: #444;
}
.glyph-a {
    font: 600 15px "Open Sans", sans-serif;
    fill: #666;
}
.glyph-a.small {
    font-size: 14px;
}
.glyph-a.large {
    font-size: 17px;
}
.ab {
    font: bold 12px "Open Sans", sans-serif;
    fill: #777;
}
.select {
    position: relative;
    display: flex;
}
.select::after {
    content: "";
    position: absolute;
    right: 4px;
    top: 11px;
    border: 4px solid transparent;
    border-top-color: #666;
    border-bottom: 0;
}
select {
    appearance: none;
    height: 27px;
    padding: 0 0 2px 2px;
    border: 1px solid #c6c6c6;
    background-color: #fff;
}
.font-name {
    width: 175px;
}
.font-size {
    width: 47px;
    padding-left: 4px;
    border-left: 0;
}
.number-format {
    width: 152px;
}
.stack {
    display: flex;
    flex-direction: column;
}
.item {
    display: flex;
    align-items: center;
    gap: 4px;
    height: 28px;
    padding-bottom: 2px;
}
.item.wide {
    height: 27px;
    gap: 3px;
    padding-left: 2px;
}
.item.wide .caret {
    margin-left: 7px;
}
.clipboard .stack {
    width: 79px;
    flex-shrink: 0;
}
.item .far {
    margin-left: 6px;
}
.editing .stack {
    width: 107px;
    padding-left: 4px;
}
.editing .item {
    height: 27px;
}
.big {
    display: flex;
    flex-direction: column;
    align-items: center;
    flex-shrink: 0;
    width: 50px;
    height: 87px;
}
.big-icon {
    display: flex;
    align-items: center;
    justify-content: center;
    height: 43px;
    padding-top: 2px;
}
.big > .caret {
    margin-top: 8px;
}
.paste {
    margin-right: 3px;
}
.netdisk .big {
    width: 72px;
}
.cond {
    width: 64px;
}
.table-format {
    width: 77px;
}
.with-caret {
    display: flex;
    align-items: center;
    gap: 3px;
}
.gallery {
    display: flex;
    width: 282px;
    height: 77px;
    margin-top: 2px;
    border: 1px solid #ababab;
    background-color: #fff;
    color: #222;
}
.gallery-items {
    flex: 1;
    display: grid;
    grid-template-columns: 1fr 1fr;
    padding: 4px 0;
}
.gallery-items button {
    padding: 0 6px;
    border: 3px solid transparent;
    font-family: "Liberation Mono", "Noto Sans CJK SC", monospace;
    font-size: 17px;
    font-weight: 300;
    text-align: left;
}
.gallery-items .sans {
    font-family: "Open Sans", "Noto Sans CJK SC", sans-serif;
    font-size: 17px;
    font-weight: normal;
    color: #000;
}
.gallery-items .chosen {
    border-color: #c5c5c5;
}
.gallery-scroll {
    display: flex;
    flex-direction: column;
    width: 18px;
    border-left: 1px solid #c6c6c6;
}
.gallery-scroll button {
    flex: 1;
    display: flex;
    flex-direction: column;
    align-items: center;
    justify-content: center;
}
.gallery-scroll button + button {
    border-top: 1px solid #c6c6c6;
}
.gallery-scroll .more::before {
    content: "";
    width: 7px;
    height: 1px;
    margin-bottom: 2px;
    background-color: #666;
}
.sort {
    position: relative;
}
.sort .big, .find {
    width: 80px;
}
.pressed {
    background-color: #c5c5c5;
}
.az {
    font: 600 19px "Open Sans", sans-serif;
}
.mini {
    font: bold 12px "Open Sans", sans-serif;
}
.tiny {
    font: bold 7px "Open Sans", sans-serif;
}
.blue {
    fill: #4a7fb8;
}
.violet {
    fill: #9358b0;
}

/* Menú de ordenar */
.menu {
    position: absolute;
    top: 84px;
    left: 0;
    width: 176px;
    padding: 2px 0 0;
    background-color: #fff;
    border: 1px solid #c6c6c6;
    box-shadow: 1px 2px 3px rgba(0, 0, 0, 0.2);
}
.menu button {
    display: flex;
    align-items: center;
    gap: 13px;
    width: 100%;
    height: 30px;
    padding: 0 0 2px 6px;
}
.menu button:disabled {
    color: #aaa;
}
.menu hr {
    margin: 0 1px 1px 39px;
    border: 0;
    border-top: 1px solid #e1e1e1;
}
.mark {
    position: absolute;
    border: 4px solid #ff2010;
    border-radius: 5px;
    pointer-events: none;
}
.mark-menu {
    top: 80px;
    left: 8px;
    width: 102px;
    height: 43px;
}

/* Barra de fórmulas */
.formula-bar {
    display: flex;
    flex-shrink: 0;
    height: 56px;
    padding: 12px 0;
    background-color: #e6e6e6;
}
.name-box, .formula-buttons, .formula {
    height: 32px;
    border: 1px solid #c6c6c6;
    background-color: #fdfdfd;
}
.name-box {
    display: flex;
    align-items: center;
    width: 96px;
    padding-right: 7px;
    border-left: 0;
}
.name-box input {
    flex: 1;
    min-width: 0;
}
.dots {
    display: flex;
    flex-direction: column;
    align-items: center;
    justify-content: center;
    gap: 2px;
    width: 37px;
}
.dots i {
    width: 3px;
    height: 3px;
    background-color: #aaa;
}
.formula-buttons {
    display: flex;
    width: 137px;
    margin-right: 3px;
}
.formula-buttons button {
    flex: 1;
    display: flex;
    align-items: center;
    justify-content: center;
}
.fx {
    font: bold 22px "Liberation Serif", serif;
    color: #666;
}
.fx .x {
    font-size: 16px;
    padding-top: 4px;
}
.formula {
    flex: 1;
    padding: 0 0 2px 12px;
    border-right: 0;
    font-family: "Noto Sans CJK SC", sans-serif;
    font-size: 17px;
    font-weight: 300;
}

/* Hoja */
.sheet {
    position: relative;
    flex: 1;
    min-height: 0;
    overflow: hidden;
}
table {
    width: 2384px;
    table-layout: fixed;
    border-collapse: separate;
    border-spacing: 0;
}
.col-a {
    width: 151px;
}
.col-b {
    width: 173px;
}
.col-c {
    width: 117px;
}
.col-d {
    width: 183px;
}
.col {
    width: 80px;
}
th, td {
    height: 24px;
    padding: 0;
    line-height: 22px;
    border-right: 1px solid #d4d4d4;
    border-bottom: 1px solid #d4d4d4;
    color: #111;
    overflow: hidden;
    white-space: nowrap;
}
th {
    padding-top: 5px;
    line-height: 18px;
    background-color: #e6e6e6;
    border-right-color: #b5b5b5;
    border-bottom-color: #999;
    font-family: "Liberation Serif", serif;
    font-size: 16px;
    font-weight: normal;
}
th.current {
    padding-top: 4px;
    background-color: #d2d2d2;
    border-bottom: 2px solid #217346;
    color: #217346;
}
.score, .head {
    text-align: center;
    font-family: "Noto Sans CJK SC", sans-serif;
    font-size: 17px;
    font-weight: 300;
}
.picked {
    background-color: #c6c6c6;
    border-bottom-color: #a6a6a6;
}
.note, .head {
    padding-top: 4px;
    line-height: 19px;
    font-family: "Liberation Serif", "Noto Sans CJK SC", serif;
    font-size: 18px;
    font-weight: 300;
}
.note {
    padding-left: 3px;
}
.selection {
    position: absolute;
    top: 46px;
    left: 149px;
    width: 176px;
    height: 435px;
    border: 2px solid #217346;
    box-shadow: inset 0 0 0 1px #fff;
}
.selection::after {
    content: "";
    position: absolute;
    right: -3px;
    bottom: -3px;
    width: 6px;
    height: 6px;
    background-color: #217346;
    border-top: 1px solid #fff;
    border-left: 1px solid #fff;
}
.mark-range {
    top: 41px;
    left: 135px;
    width: 209px;
    height: 461px;
}

/* Marca de agua */
.watermark {
    position: absolute;
    right: 94px;
    bottom: 31px;
}
.outline {
    fill: #fff;
    stroke: #cfcfcf;
    stroke-width: 3px;
    stroke-linejoin: round;
    paint-order: stroke;
    opacity: 0.85;
}
.wm-name {
    font: bold 76px "Liberation Sans", sans-serif;
}
.wm-du {
    font: 44px "Liberation Sans", sans-serif;
}
.wm-cjk {
    font: bold 56px "Noto Sans CJK SC", sans-serif;
}
.wm-url {
    font: 38px "Open Sans", sans-serif;
}
```
